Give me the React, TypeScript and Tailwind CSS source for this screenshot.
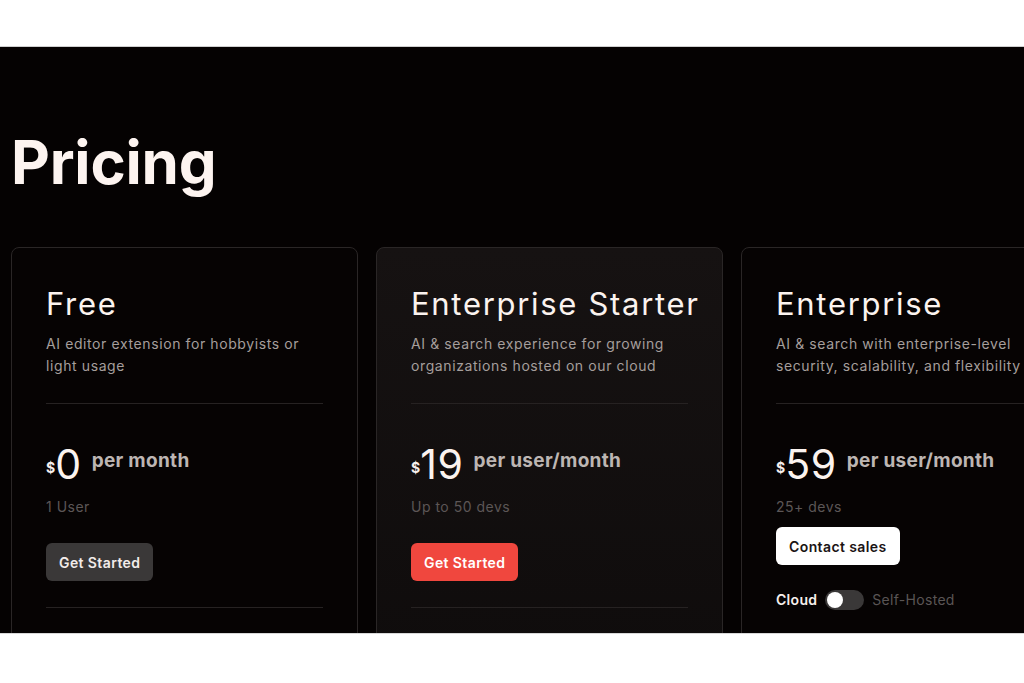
import { useState } from 'react';

// ─── Types ────────────────────────────────────────────────────────────────────

interface Plan {
  name: string;
  description: string;
  price: string;
  unit: string;
  seats: string;
  cta: 'dark' | 'red' | 'light';
  ctaLabel: string;
  highlight?: boolean;
  hosting?: boolean;
}

// ─── Data ─────────────────────────────────────────────────────────────────────

const PLANS: Plan[] = [
  {
    name: 'Free',
    description: 'AI editor extension for hobbyists or light usage',
    price: '0',
    unit: 'per month',
    seats: '1 User',
    cta: 'dark',
    ctaLabel: 'Get Started',
  },
  {
    name: 'Enterprise Starter',
    description: 'AI & search experience for growing organizations hosted on our cloud',
    price: '19',
    unit: 'per user/month',
    seats: 'Up to 50 devs',
    cta: 'red',
    ctaLabel: 'Get Started',
    highlight: true,
  },
  {
    name: 'Enterprise',
    description: 'AI & search with enterprise-level security, scalability, and flexibility',
    price: '59',
    unit: 'per user/month',
    seats: '25+ devs',
    cta: 'light',
    ctaLabel: 'Contact sales',
    hosting: true,
  },
];

const CTA_CLASS: Record<Plan['cta'], string> = {
  dark: 'bg-[#3a3838] text-[#f2ecea]',
  red: 'bg-[#f0473e] text-white',
  light: 'bg-white text-[#1a1414]',
};

// ─── Sub-components ───────────────────────────────────────────────────────────

function HostingToggle() {
  const [selfHosted, setSelfHosted] = useState(false);
  return (
    <div className="mt-[24px] flex items-center gap-2 text-[14px] tracking-[0.3px]">
      <span className={`font-semibold ${selfHosted ? 'text-[#5a5555]' : 'text-[#f6efec]'}`}>Cloud</span>
      <button
        type="button"
        aria-label="Toggle hosting"
        onClick={() => setSelfHosted(v => !v)}
        className="relative h-[20px] w-[39px] rounded-full bg-[#3a3838]"
      >
        <span
          className={`absolute top-[2px] h-[16px] w-[16px] rounded-full bg-white ${selfHosted ? 'left-[21px]' : 'left-[2px]'}`}
        />
      </button>
      <span className={selfHosted ? 'text-[#f6efec] font-semibold' : 'text-[#5a5555]'}>Self-Hosted</span>
    </div>
  );
}

function PlanCard({ plan }: { plan: Plan }) {
  return (
    <div
      className={`h-[420px] w-[347px] shrink-0 rounded-[8px] border border-[#2a2626] px-[34px] pt-[36px] ${
        plan.highlight ? 'bg-gradient-to-b from-[#161212] to-[#0f0c0c]' : 'bg-[#060303]'
      }`}
    >
      <h2 className="text-[31px] leading-[40px] font-normal tracking-[1.7px] text-[#fbf3ef] whitespace-nowrap">
        {plan.name}
      </h2>
      <p className="mt-[9px] text-[14px] leading-[22px] tracking-[0.6px] text-[#a59e9c]">{plan.description}</p>

      <div className="mt-[26px] h-px bg-[#262222]" />

      <div className="mt-[39px] flex items-end gap-[10px]">
        <div className="flex items-end">
          <span className="mb-[7px] text-[14px] font-bold text-[#f6efec]">$</span>
          <span className="text-[41px] leading-[42px] font-normal tracking-[0.6px] text-[#fbf3ef]">{plan.price}</span>
        </div>
        <span className="mb-[10px] text-[19px] font-bold tracking-[0.3px] text-[#bdb6b3]">{plan.unit}</span>
      </div>

      <p className="mt-[12px] text-[14px] leading-[20px] tracking-[0.5px] text-[#5c5656]">{plan.seats}</p>

      <button
        type="button"
        className={`${plan.hosting ? 'mt-[10px]' : 'mt-[26px]'} h-[38px] rounded-[6px] px-[13px] text-[14px] font-semibold tracking-[0.4px] ${CTA_CLASS[plan.cta]}`}
      >
        {plan.ctaLabel}
      </button>

      {plan.hosting ? <HostingToggle /> : <div className="mt-[26px] h-px bg-[#262222]" />}
    </div>
  );
}

// ─── Page ─────────────────────────────────────────────────────────────────────

export default function App() {
  return (
    <div className="h-[683px] w-[1024px] overflow-hidden bg-white font-['Inter','Liberation_Sans',sans-serif]">
      <div className="h-[47px] border-b border-[#cfcfcf] bg-white" />

      <section className="h-[586px] overflow-hidden bg-[#050202] pl-[11px] pt-[83px]">
        <h1 className="text-[60px] leading-[64px] font-bold tracking-[-0.2px] text-[#fdf4f0]">Pricing</h1>

        <div className="mt-[53px] flex gap-[18px]">
          {PLANS.map(plan => (
            <PlanCard key={plan.name} plan={plan} />
          ))}
        </div>
      </section>

      <div className="h-[50px] border-t border-[#d8d8d8] bg-white" />
    </div>
  );
}
